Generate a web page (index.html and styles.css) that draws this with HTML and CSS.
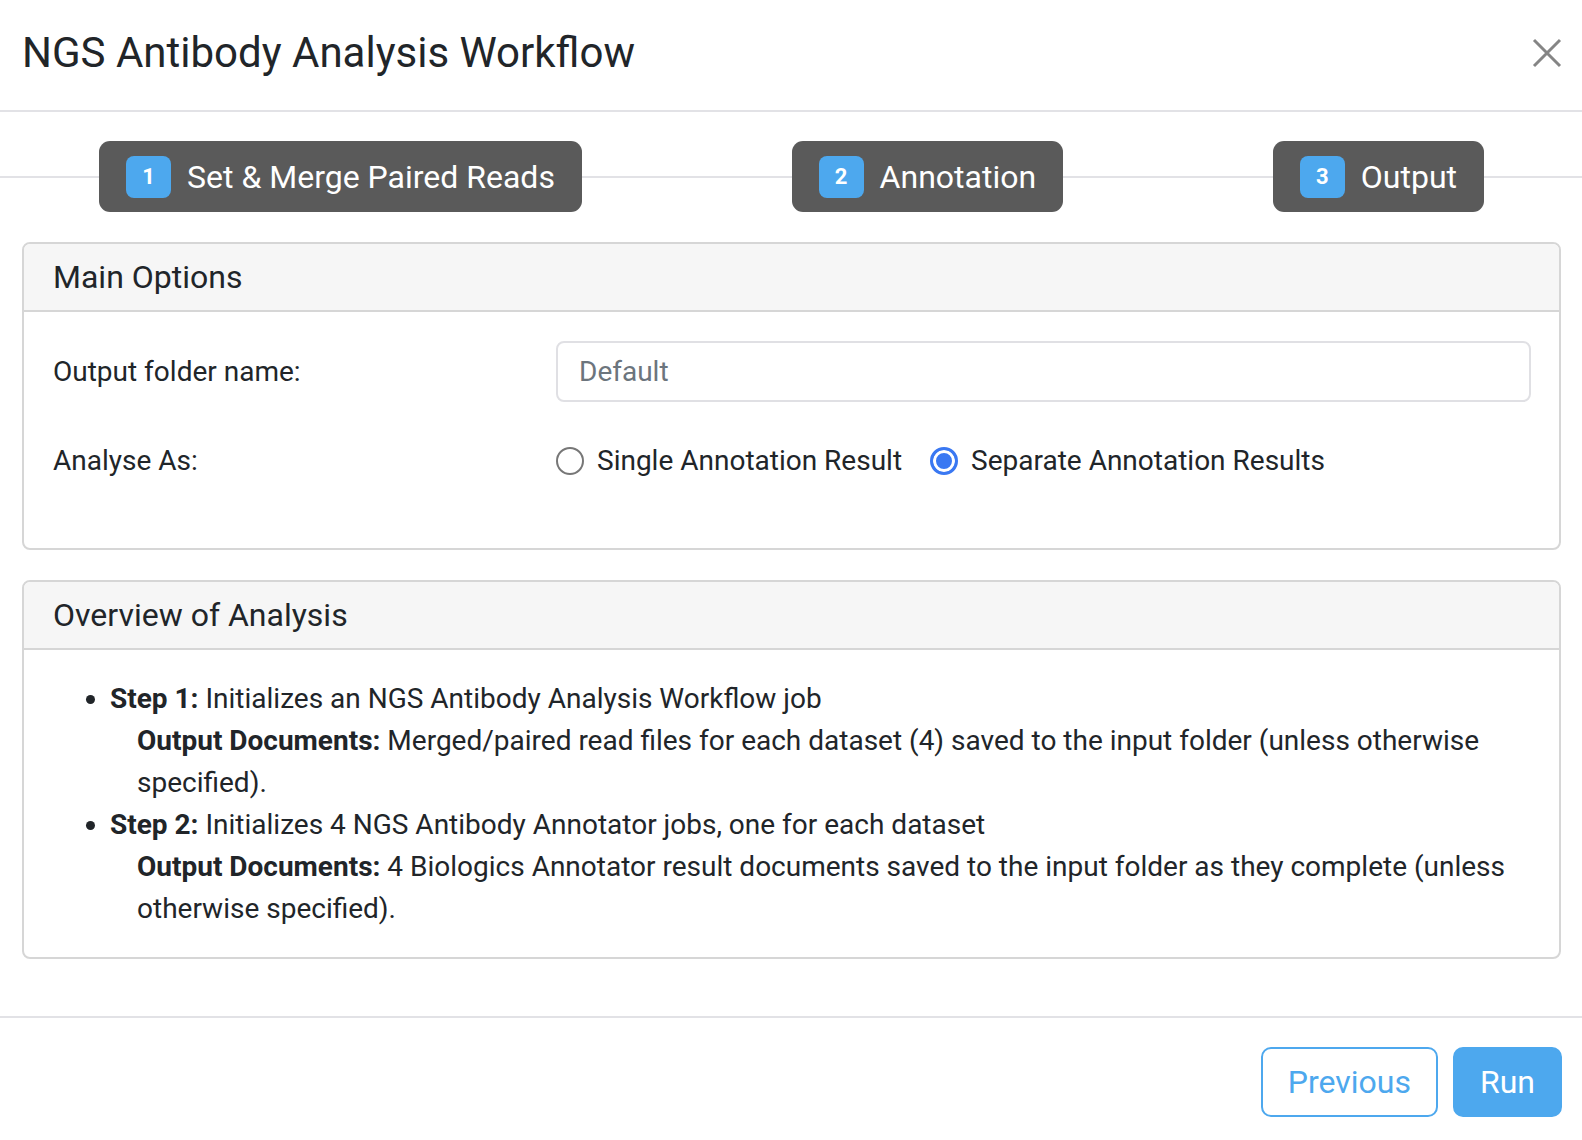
FILE: index.html
```html
<!DOCTYPE html>
<html lang="en">
<head>
    <meta charset="UTF-8">
    <meta name="viewport" content="width=device-width, initial-scale=1.0">
    <title>NGS Antibody Analysis Workflow</title>
    <link rel="stylesheet" href="styles.css">
</head>
<body>
    <div class="modal">
        <header class="modal-header">
            <h1>NGS Antibody Analysis Workflow</h1>
            <button class="close-btn" aria-label="Close">
                <svg width="30" height="30" viewBox="0 0 30 30">
                    <path d="M2 2 L28 28 M28 2 L2 28" stroke="#858585" stroke-width="3" fill="none"/>
                </svg>
            </button>
        </header>

        <nav class="steps">
            <div class="step"><span class="step-num">1</span>Set &amp; Merge Paired Reads</div>
            <div class="step"><span class="step-num">2</span>Annotation</div>
            <div class="step"><span class="step-num">3</span>Output</div>
        </nav>

        <main class="modal-body">
            <section class="card">
                <h2 class="card-header">Main Options</h2>
                <div class="card-body options">
                    <div class="form-row">
                        <label for="folder">Output folder name:</label>
                        <input type="text" id="folder" placeholder="Default">
                    </div>
                    <div class="form-row">
                        <span class="label">Analyse As:</span>
                        <div class="radios">
                            <label class="radio"><input type="radio" name="analyse"> Single Annotation Result</label>
                            <label class="radio"><input type="radio" name="analyse" checked> Separate Annotation Results</label>
                        </div>
                    </div>
                </div>
            </section>

            <section class="card">
                <h2 class="card-header">Overview of Analysis</h2>
                <div class="card-body overview">
                    <ul>
                        <li>
                            <div><b>Step 1:</b> Initializes an NGS Antibody Analysis Workflow job</div>
                            <p><b>Output Documents:</b> Merged/paired read files for each dataset (4) saved to the input folder (unless otherwise specified).</p>
                        </li>
                        <li>
                            <div><b>Step 2:</b> Initializes 4 NGS Antibody Annotator jobs, one for each dataset</div>
                            <p><b>Output Documents:</b> 4 Biologics Annotator result documents saved to the input folder as they complete (unless otherwise specified).</p>
                        </li>
                    </ul>
                </div>
            </section>
        </main>

        <footer class="modal-footer">
            <button class="btn btn-outline">Previous</button>
            <button class="btn btn-primary">Run</button>
        </footer>
    </div>
</body>
</html>
```

FILE: styles.css
```css
body {
    margin: 0;
    font-family: Roboto, "Liberation Sans", sans-serif;
    color: #212529;
    background: #fff;
}

.modal {
    width: 1582px;
}

.modal-header {
    display: flex;
    align-items: center;
    justify-content: space-between;
    height: 112px;
    padding: 0 20px 5px 22px;
    border-bottom: 2px solid #e2e2e6;
    box-sizing: border-box;
}

.modal-header h1 {
    margin: 0;
    font-size: 42px;
    font-weight: 400;
    line-height: 50px;
    color: #212529;
}

.close-btn {
    background: none;
    border: none;
    padding: 0;
    width: 30px;
    height: 30px;
    cursor: pointer;
}

.steps {
    display: flex;
    justify-content: space-between;
    padding: 29px 98px 30px 99px;
    background: linear-gradient(#e2e2e6, #e2e2e6) center / 100% 2px no-repeat;
}

.step {
    display: flex;
    align-items: center;
    height: 71px;
    padding: 0 27px;
    background: #5a5a5a;
    border-radius: 11px;
    color: #fff;
    font-size: 32px;
}

.step-num {
    display: flex;
    align-items: center;
    justify-content: center;
    width: 45px;
    height: 42px;
    margin-right: 16px;
    background: #4da8ee;
    border-radius: 8px;
    font-size: 22px;
    font-weight: 700;
}

.modal-body {
    padding: 0 21px 57px 22px;
}

.card {
    border: 2px solid #d6d6d6;
    border-radius: 8px;
    margin-bottom: 30px;
    overflow: hidden;
}

.card:last-child {
    margin-bottom: 0;
}

.card-header {
    margin: 0;
    padding: 14px 29px 14px;
    background: #f6f6f6;
    border-bottom: 2px solid #d6d6d6;
    font-size: 32px;
    font-weight: 400;
    line-height: 38px;
}

.card-body {
    font-size: 28px;
}

.options {
    display: flex;
    flex-direction: column;
    gap: 28px;
    padding: 29px 28px 57px 29px;
}

.form-row {
    display: grid;
    grid-template-columns: 503px 1fr;
    align-items: center;
    height: 61px;
}

.form-row input[type="text"] {
    height: 61px;
    box-sizing: border-box;
    border: 2px solid #e0e0e4;
    border-radius: 8px;
    padding: 0 21px;
    font-family: inherit;
    font-size: 28px;
    color: #212529;
}

.form-row input[type="text"]::placeholder {
    color: #6c757d;
}

.radios {
    display: flex;
    gap: 28px;
}

.radio {
    display: flex;
    align-items: center;
    gap: 13px;
}

.radio input {
    appearance: none;
    margin: 0;
    width: 28px;
    height: 28px;
    border: 2px solid #777;
    border-radius: 50%;
    box-sizing: border-box;
    background: #fff;
}

.radio input:checked {
    border: 3px solid #3a78f2;
    background: #3a78f2;
    box-shadow: inset 0 0 0 3px #fff;
}

.overview {
    padding: 28px 30px 27px;
}

.overview ul {
    margin: 0;
    padding-left: 56px;
    line-height: 42px;
}

.overview p {
    margin: 0;
    padding-left: 27px;
}

.modal-footer {
    display: flex;
    justify-content: flex-end;
    gap: 15px;
    padding: 29px 20px 0;
    border-top: 2px solid #e2e2e6;
}

.btn {
    height: 70px;
    padding: 0 25px;
    border-radius: 10px;
    font-family: inherit;
    font-size: 32px;
    cursor: pointer;
}

.btn-outline {
    background: #fff;
    border: 2px solid #4da8ee;
    color: #4da8ee;
}

.btn-primary {
    background: #4da8ee;
    border: 2px solid #4da8ee;
    color: #fff;
}
```
